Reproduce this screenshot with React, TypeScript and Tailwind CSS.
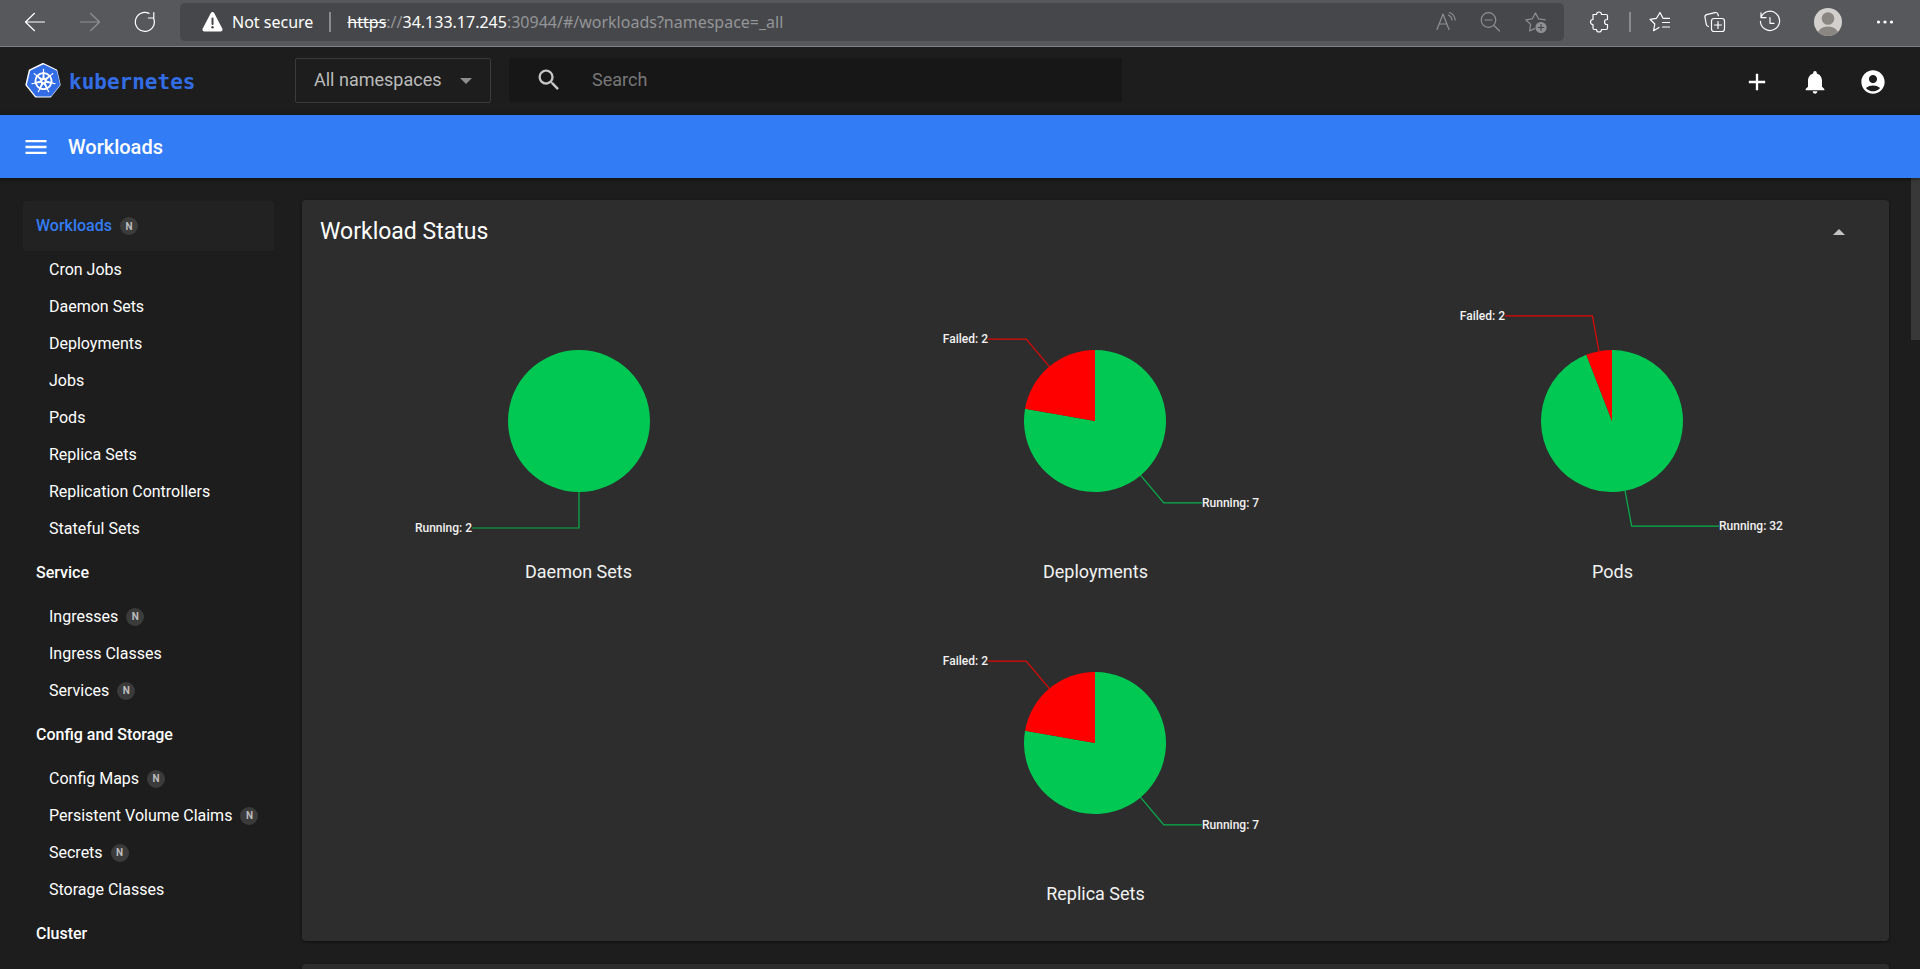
import type { ReactNode } from "react";
import { MdAccountCircle, MdAdd, MdMenu, MdNotifications, MdSearch } from "react-icons/md";
import { SiKubernetes } from "react-icons/si";

const GREEN = "#00c853";
const RED = "#ff0000";

type Slice = { name: string; value: number; color: string };
type Chart = { title: string; slices: Slice[] };
type NavItem = { label: string; namespaced?: boolean };
type NavGroup = NavItem & { active?: boolean; items: NavItem[] };

const charts: Chart[] = [
  { title: "Daemon Sets", slices: [{ name: "Running", value: 2, color: GREEN }] },
  {
    title: "Deployments",
    slices: [
      { name: "Running", value: 7, color: GREEN },
      { name: "Failed", value: 2, color: RED },
    ],
  },
  {
    title: "Pods",
    slices: [
      { name: "Running", value: 32, color: GREEN },
      { name: "Failed", value: 2, color: RED },
    ],
  },
  {
    title: "Replica Sets",
    slices: [
      { name: "Running", value: 7, color: GREEN },
      { name: "Failed", value: 2, color: RED },
    ],
  },
];

const nav: NavGroup[] = [
  {
    label: "Workloads",
    namespaced: true,
    active: true,
    items: [
      { label: "Cron Jobs" },
      { label: "Daemon Sets" },
      { label: "Deployments" },
      { label: "Jobs" },
      { label: "Pods" },
      { label: "Replica Sets" },
      { label: "Replication Controllers" },
      { label: "Stateful Sets" },
    ],
  },
  {
    label: "Service",
    items: [
      { label: "Ingresses", namespaced: true },
      { label: "Ingress Classes" },
      { label: "Services", namespaced: true },
    ],
  },
  {
    label: "Config and Storage",
    items: [
      { label: "Config Maps", namespaced: true },
      { label: "Persistent Volume Claims", namespaced: true },
      { label: "Secrets", namespaced: true },
      { label: "Storage Classes" },
    ],
  },
  { label: "Cluster", items: [] },
];

function BarIcon({ children, label, dim }: { children: ReactNode; label: string; dim?: boolean }) {
  return (
    <button aria-label={label} className={dim ? "text-[#8f9093]" : "text-white"}>
      <svg width="24" height="24" viewBox="0 0 24 24" fill="none" stroke="currentColor" strokeWidth="1.2" strokeLinecap="round" strokeLinejoin="round">
        {children}
      </svg>
    </button>
  );
}

function BrowserBar() {
  return (
    <div className="flex h-[47px] shrink-0 items-start border-b border-[#808184] bg-[#57585c] pt-[3px] font-['Noto_Sans','Open_Sans',sans-serif]">
      <div className="flex h-[38px] w-[180px] shrink-0 items-center gap-[31px] pl-[23px]">
        <BarIcon label="Back">
          <path d="M2.500 12h19M11.500 3.300 2.500 12l9 8.700" />
        </BarIcon>
        <BarIcon label="Forward" dim>
          <path d="M2.500 12h19M12.500 3.300l9 8.700-9 8.700" />
        </BarIcon>
        <BarIcon label="Reload">
          <path d="M20.500 8A9.500 9.500 0 1 1 16 3.400M20.800 2.600V8h-5.400" />
        </BarIcon>
      </div>
      <div className="flex h-[38px] min-w-0 flex-1 items-center rounded-[5px] bg-[#46474a] pr-4 pl-[21px]">
        <svg width="23" height="20" viewBox="0 0 23 20" aria-hidden="true">
          <path d="M9.700 1.200a2 2 0 0 1 3.600 0l8.100 15.500a2 2 0 0 1-1.800 2.800H3.400a2 2 0 0 1-1.800-2.800z" fill="#fff" />
          <path d="M11.500 6.500v5.500" stroke="#46474a" strokeWidth="2" strokeLinecap="round" />
          <circle cx="11.500" cy="15.300" r="1.200" fill="#46474a" />
        </svg>
        <span className="ml-2 text-[16px] whitespace-nowrap text-white">Not secure</span>
        <span className="mx-4 h-5 w-[2px] bg-[#8a8b8e]" />
        <span className="flex-1 truncate text-[16px] text-[#949598]">
          <span className="text-white line-through">https</span>://<span className="text-white">34.133.17.245</span>
          :30944/#/workloads?namespace=_all
        </span>
        <div className="flex items-center gap-[21px]">
          <BarIcon label="Read aloud" dim>
            <path d="M3 19.500 9 4l6 15.500M5.200 14h7.600M14.500 5c2 1 3.200 2.600 3.500 5M15.500 2.500c3.200 1.200 5.200 3.800 5.700 7.500" />
          </BarIcon>
          <BarIcon label="Zoom out" dim>
            <circle cx="9.500" cy="10" r="7.300" />
            <path d="m15 15.500 5.500 5.500M6 10h7" />
          </BarIcon>
          <BarIcon label="Add to favourites" dim>
            <path d="M10.500 18.600 5.600 21l1-6.600L1.800 9.800l6.500-1L11.500 3l3 5.800 6.700 1" />
            <circle cx="17" cy="17.500" r="5" fill="currentColor" />
            <path d="M17 14.700v5.600M14.200 17.500h5.600" stroke="#46474a" />
          </BarIcon>
        </div>
      </div>
      <div className="flex h-[38px] shrink-0 items-center pr-[23px] pl-[23px]">
        <BarIcon label="Extensions">
          <path d="M6 4.500h3.500a2.500 2.500 0 0 1 5 0H19a1.500 1.500 0 0 1 1.500 1.500v3.500H20a2.500 2.500 0 0 0 0 5h.5V18a1.500 1.500 0 0 1-1.500 1.500h-4.500a2.500 2.500 0 0 1-5 0H7.500A1.500 1.500 0 0 1 6 18v-3.500a2.500 2.500 0 0 1 0-5H6z" />
        </BarIcon>
        <span className="mr-[17px] ml-[18px] h-5 w-[2px] bg-[#8a8b8e]" />
        <div className="flex items-center gap-[31px]">
          <BarIcon label="Favourites">
            <path d="m11 17.500-5.400 3.200 1.200-6.700-4.800-4.700 6.500-1L12 2.500l3 5.800h6.500M14.500 12.500h7M14.500 17h7" />
          </BarIcon>
          <BarIcon label="Collections">
            <rect x="8.500" y="8.500" width="13" height="13" rx="2.500" />
            <path d="M15 11.500v7M11.500 15h7M5.500 16.500c-1.300-.3-1.900-1-2.200-2.200L2 7.500c-.3-1.500.4-2.500 1.700-2.900L12 2.600c1.400-.3 2.400.3 2.900 1.600l.5 1.600" />
          </BarIcon>
          <BarIcon label="History">
            <path d="M3 7.500a9.600 9.600 0 1 1-.6 3.800M3 2.800v4.900h5M12 7.500v5.800h4" />
          </BarIcon>
        </div>
        <button aria-label="Profile" className="ml-8">
          <svg width="28" height="28" viewBox="0 0 28 28">
            <defs>
              <clipPath id="avatar">
                <circle cx="14" cy="14" r="14" />
              </clipPath>
            </defs>
            <g clipPath="url(#avatar)">
              <rect width="28" height="28" fill="#d2d0cd" />
              <circle cx="14" cy="10.500" r="6.300" fill="#8a8783" />
              <ellipse cx="14" cy="26.500" rx="10.500" ry="8" fill="#8a8783" />
            </g>
          </svg>
        </button>
        <button aria-label="Settings and more" className="ml-[31px] text-white">
          <svg width="24" height="24" viewBox="0 0 24 24" fill="currentColor">
            <circle cx="5.500" cy="12" r="1.600" />
            <circle cx="12" cy="12" r="1.600" />
            <circle cx="18.500" cy="12" r="1.600" />
          </svg>
        </button>
      </div>
    </div>
  );
}

function Header() {
  return (
    <header className="flex h-[68px] shrink-0 items-center bg-[#1d1d1d]">
      <a href="#/workloads" className="flex w-[295px] shrink-0 items-center gap-2 pl-[25px] text-[#326de6]">
        <span className="relative h-9 w-9">
          <svg width="36" height="36" viewBox="0 0 36 36" className="absolute inset-0">
            <path d="M18 1 31.300 7.400 34.600 21.800 25.400 33.400 10.600 33.400 1.400 21.800 4.700 7.400Z" fill="#fff" stroke="#fff" strokeWidth="2" strokeLinejoin="round" />
          </svg>
          <SiKubernetes size={33} className="absolute top-[1px] left-[2px]" />
        </span>
        <span className="pt-1 font-['DejaVu_Sans_Mono',monospace] text-[21px] font-bold">kubernetes</span>
      </a>
      <div className="flex flex-1 items-center pb-[2px]">
        <div className="relative w-[196px] shrink-0">
          <select aria-label="Namespace" className="block h-[45px] w-full appearance-none rounded-[2px] border border-[#3b3b3b] bg-transparent px-[18px] pb-[2px] text-[18px] text-[#bbbbbb]">
            <option>All namespaces</option>
          </select>
          <svg width="12" height="6" viewBox="0 0 12 6" className="pointer-events-none absolute top-5 right-[19px]">
            <path d="M0 0h12L6 6z" fill="#8e8e8e" />
          </svg>
        </div>
        <label className="ml-[18px] flex h-11 w-[613px] items-center rounded-[2px] bg-[#171717] pl-[26px]">
          <MdSearch size={28} className="shrink-0 text-[#c7c7c7]" />
          <input type="text" aria-label="Search" placeholder="Search" className="ml-[29px] h-full min-w-0 flex-1 bg-transparent pb-[2px] text-[18px] text-white outline-none placeholder:text-[#777777]" />
        </label>
      </div>
      <div className="flex items-center gap-[30px] pt-[2px] pr-[33px] text-white">
        <button aria-label="Create new resource">
          <MdAdd size={28} />
        </button>
        <button aria-label="Notifications">
          <MdNotifications size={28} />
        </button>
        <button aria-label="Account">
          <MdAccountCircle size={28} />
        </button>
      </div>
    </header>
  );
}

function Badge() {
  return (
    <span className="flex h-[18px] w-[18px] items-center justify-center rounded-full bg-[#3b3b3b] text-[10px] font-bold text-[#bdbdbd]">
      N
    </span>
  );
}

function Sidebar() {
  return (
    <nav className="w-[302px] shrink-0 pt-[23px] pr-7 pl-[23px] text-[16px] text-white">
      {nav.map((group) => (
        <section key={group.label} className="pb-px">
          <a
            href="#/"
            className={
              group.active
                ? "flex h-[50px] items-center gap-2 rounded-[3px] bg-[#222222] px-[13px] font-medium text-[#327df5]"
                : "flex h-[50px] items-center gap-2 rounded-[3px] px-[13px] font-medium"
            }
          >
            {group.label}
            {group.namespaced && <Badge />}
          </a>
          {group.items.map((item) => (
            <a key={item.label} href="#/" className="flex h-[37px] items-center gap-2 pl-[26px]">
              {item.label}
              {item.namespaced && <Badge />}
            </a>
          ))}
        </section>
      ))}
    </nav>
  );
}

const R = 71;
const LABEL_R = 107;

function Pie({ title, slices }: Chart) {
  const total = slices.reduce((sum, s) => sum + s.value, 0);
  let start = 0;
  const parts = slices.map((s) => {
    const end = start + (s.value / total) * 2 * Math.PI;
    const mid = (start + end) / 2;
    const at = (r: number, a: number) => [r * Math.sin(a), -r * Math.cos(a)];
    const [x0, y0] = at(R, start);
    const [x1, y1] = at(R, end);
    const [ix, iy] = at(R, mid);
    const [ox, oy] = at(LABEL_R, mid);
    const side = mid < Math.PI - 0.0001 ? 1 : -1;
    const large = end - start > Math.PI ? 1 : 0;
    start = end;
    return { ...s, side, oy, arc: `M0 0L${x0} ${y0}A${R} ${R} 0 ${large} 1 ${x1} ${y1}Z`, line: `${ix},${iy} ${ox},${oy} ${side * LABEL_R},${oy}` };
  });
  return (
    <figure className="flex w-1/3 flex-col items-center">
      <svg width="400" height="286" viewBox="-200 -143 400 286" role="img" aria-label={title}>
        {parts.length === 1 ? (
          <circle r={R} fill={parts[0].color} />
        ) : (
          parts.map((p) => <path key={p.name} d={p.arc} fill={p.color} />)
        )}
        {parts.map((p) => (
          <g key={p.name}>
            <polyline points={p.line} fill="none" stroke={p.color} strokeWidth="1.2" strokeOpacity="0.85" />
            <text x={p.side * LABEL_R} y={p.oy + 4} textAnchor={p.side > 0 ? "start" : "end"} fill="#f2f2f2" className="text-[12px] font-medium">
              {`${p.name}: ${p.value}`}
            </text>
          </g>
        ))}
      </svg>
      <figcaption className="h-9 text-[18px] leading-4 text-[#f2f2f2]">{title}</figcaption>
    </figure>
  );
}

export default function App() {
  return (
    <div className="flex h-screen flex-col overflow-hidden bg-[#1d1d1d] font-[Roboto,sans-serif]">
      <BrowserBar />
      <Header />
      <div className="z-10 flex h-[63px] shrink-0 items-center gap-[18px] bg-[#327df5] pl-[22px] text-white shadow-[0_1px_4px_rgba(0,0,0,0.5)]">
        <button aria-label="Toggle navigation">
          <MdMenu size={28} />
        </button>
        <h1 className="text-[20px] font-medium">Workloads</h1>
      </div>
      <div className="flex min-h-0 flex-1">
        <Sidebar />
        <main className="flex min-w-0 flex-1 flex-col gap-[23px] pt-[22px] pr-[22px]">
          <section className="shrink-0 rounded-[4px] bg-[#2d2d2d] px-[18px] pb-[9px] shadow-[0_1px_3px_rgba(0,0,0,0.5)]">
            <div className="flex h-16 items-center justify-between pr-[26px]">
              <h2 className="text-[23px] text-white">Workload Status</h2>
              <button aria-label="Collapse card">
                <svg width="12" height="6" viewBox="0 0 12 6">
                  <path d="M0 6h12L6 0z" fill="#c4c4c4" />
                </svg>
              </button>
            </div>
            <div className="flex flex-wrap justify-center pt-[14px] pb-[10px]">
              {charts.map((chart) => (
                <Pie key={chart.title} {...chart} />
              ))}
            </div>
          </section>
          <section className="h-40 shrink-0 rounded-[4px] bg-[#2d2d2d] shadow-[0_1px_3px_rgba(0,0,0,0.5)]" />
        </main>
        <div className="w-[9px] shrink-0">
          <div className="h-[162px] bg-[#383838]" />
        </div>
      </div>
    </div>
  );
}
